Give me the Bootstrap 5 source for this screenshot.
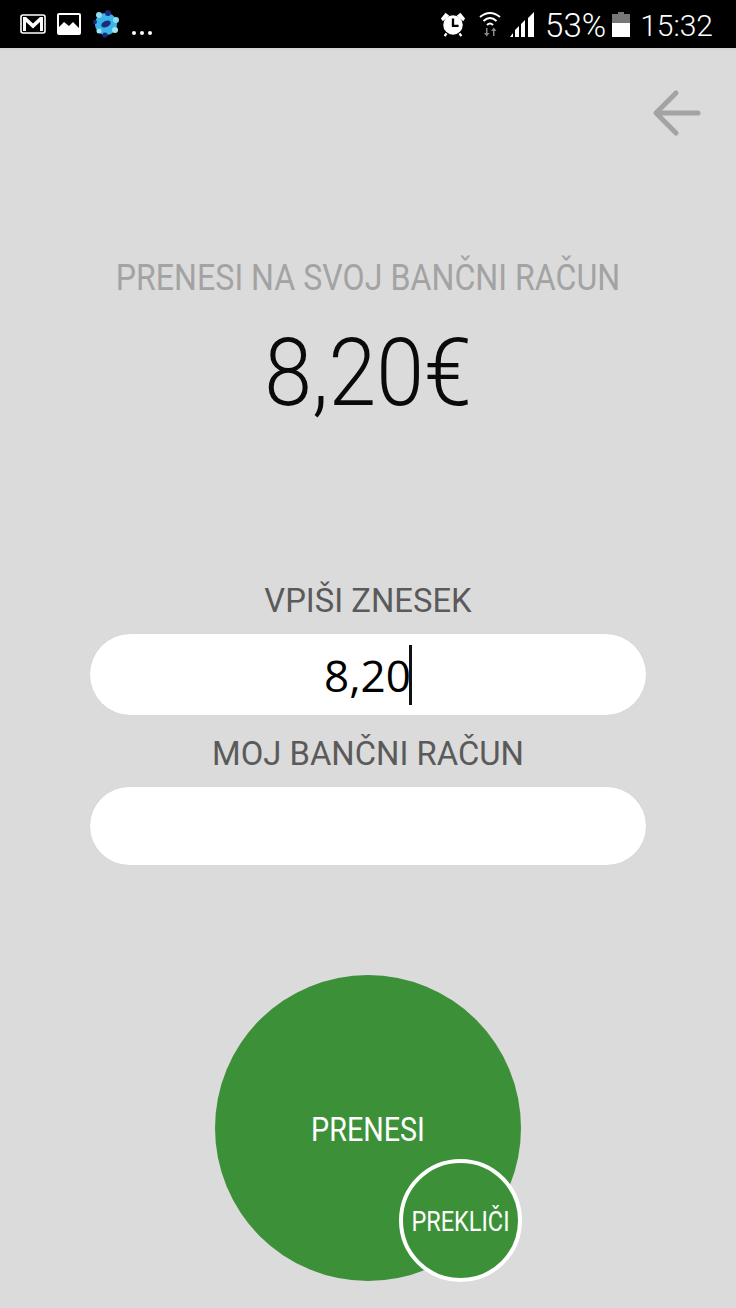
<!DOCTYPE html>
<html lang="sl">
<head>
<meta charset="utf-8">
<title>Prenesi</title>
<link href="https://cdn.jsdelivr.net/npm/bootstrap@5.3.0/dist/css/bootstrap.min.css" rel="stylesheet">
<style>
html,body{height:100%}
body{background:#dbdbdb;font-family:Roboto,"Liberation Sans",sans-serif;overflow:hidden}
.status-strip{height:50px;background:#000;color:#fff;border-bottom:2px solid #d4d4d4;padding:0 23px 0 20px}
.status-left{gap:11px}
.status-text{font-family:Roboto,sans-serif;font-size:33px;line-height:48px;font-weight:300;padding-top:3px}
.time-text{font-size:30px}
.dots-icon{margin-top:18px}
.alarm-gap{margin-right:13px}
.wifi-gap{margin-right:9px}
.signal-gap{margin-right:10px}
.batt-gap{margin:0 10px 0 6px}
.back-row{height:127px;padding:39px 34px 0 0}
.cond{display:block;transform-origin:center;white-space:nowrap}
.heading-text{font-size:36px;line-height:40px;color:#a3a3a3;margin-top:81px;transform:scaleX(.893)}
.amount-text{font-size:94px;line-height:100px;color:#0a0a0a;font-weight:300;margin-top:25px;transform:scaleX(.915)}
.form-area{margin-top:159px;padding:0 90px}
.field-label{font-size:32.800px;line-height:38px;color:#5a5a5a;text-align:center}
.pill-field{height:81px;border-radius:41px;background:#fff;box-shadow:0 0 1px #c9c9c9;font-family:"Open Sans",sans-serif;font-size:44px;color:#000;margin-top:14px}
.pill-second{height:78px;margin-top:14px}
.label-second{margin-top:20px}
.caret-bar{display:inline-block;width:3px;height:60px;background:#111;margin-left:-2px}
.action-wrap{margin-top:110px;width:306px;height:306px}
.circle-main{width:306px;height:306px;border-radius:50%;background:#3c9138;color:#fff;border:0;font-size:33px;padding:4px 0 0}
.circle-main span{display:block;transform:scaleX(.87)}
.circle-small{position:absolute;left:184px;top:184px;width:123px;height:123px;border-radius:50%;background:#3c9138;border:4px solid #fff;color:#fff;font-size:27px;padding:4px 0 0}
.circle-small span{display:block;transform:scaleX(.87)}
</style>
</head>
<body>
<div class="status-strip d-flex justify-content-between align-items-center">
  <div class="status-left d-flex align-items-center">
    <svg width="26" height="20" viewBox="0 0 26 20"><rect x="1" y="1" width="24" height="18" rx="2" fill="#000" stroke="#fff" stroke-width="1.6"/><path d="M3 3h3l7 6.500L20 3h3v14h-3V8l-7 6.500L6 8v9H3z" fill="#fff"/></svg>
    <svg width="24" height="22" viewBox="0 0 24 22"><rect width="24" height="22" rx="2" fill="#fff"/><rect x="2" y="2" width="20" height="13" fill="#000"/><path d="M2 14l5-5 5 4 4-4 6 6v5H2z" fill="#fff"/></svg>
    <svg width="28" height="28" viewBox="0 0 28 28"><circle cx="14" cy="14" r="11" fill="#3bb4e8"/><circle cx="16" cy="3" r="3" fill="#1b2a7a"/><circle cx="7" cy="5" r="3" fill="#8fdcf2"/><circle cx="24" cy="10" r="3" fill="#8fdcf2"/><circle cx="3" cy="12" r="2" fill="#1b2a7a"/><circle cx="23" cy="20" r="3" fill="#a4e3f3"/><circle cx="13" cy="25" r="2.600" fill="#1b2a7a"/><circle cx="7" cy="21" r="2.500" fill="#a4e3f3"/><ellipse cx="14" cy="14" rx="5" ry="3" fill="#1b2a7a" transform="rotate(-25 14 14)"/></svg>
    <svg class="dots-icon" width="22" height="6" viewBox="0 0 22 6"><circle cx="3" cy="3" r="2" fill="#fff"/><circle cx="11" cy="3" r="2" fill="#fff"/><circle cx="19" cy="3" r="2" fill="#fff"/></svg>
  </div>
  <div class="d-flex align-items-center">
    <svg class="alarm-gap" width="26" height="26" viewBox="0 0 28 28"><circle cx="14" cy="15" r="10.500" fill="#fff"/><path d="M14 8v8h6" fill="none" stroke="#000" stroke-width="2.500"/><path d="M1 8l5-6 4 3-7 6zM27 8l-5-6-4 3 7 6z" fill="#fff"/><path d="M7 24l-2 3M21 24l2 3" stroke="#fff" stroke-width="2.500"/></svg>
    <svg class="wifi-gap" width="22" height="26" viewBox="0 0 22 26"><g fill="none" stroke="#fff" stroke-width="2"><path d="M1 6q10-8 20 0"/><path d="M4.500 10q6.500-6 13 0"/><path d="M8 14q3-3 6 0"/></g><path d="M7 17v5H5l2.800 3.500L10.500 22h-2v-5zM14 25v-5h-2l2.800-3.500 2.700 3.500h-2v5z" fill="#888"/></svg>
    <svg class="signal-gap" width="25" height="26" viewBox="0 0 25 26"><path d="M0 26l3-4v4zM5 26v-7l4-4v11zM11 26V13l4-4v17zM18 26V7l6-6v25z" fill="#fff"/></svg>
    <span class="status-text">53%</span>
    <svg class="batt-gap" width="18" height="25" viewBox="0 0 18 25"><path d="M6 0h6v2h6v23H0V2h6z" fill="#777"/><rect y="11" width="18" height="14" fill="#fff"/></svg>
    <span class="status-text time-text">15:32</span>
  </div>
</div>

<div class="back-row d-flex justify-content-end align-items-start">
  <svg width="50" height="48" viewBox="0 0 50 48"><path d="M46 24H5M24 4L4 24l20 20" fill="none" stroke="#a3a3a3" stroke-width="5" stroke-linecap="round" stroke-linejoin="round"/></svg>
</div>

<div class="text-center">
  <div class="cond heading-text">PRENESI NA SVOJ BANČNI RAČUN</div>
  <div class="cond amount-text">8,20€</div>
</div>

<div class="form-area">
  <div class="field-label">VPIŠI ZNESEK</div>
  <div class="pill-field d-flex justify-content-center align-items-center"><span>8,20</span><span class="caret-bar"></span></div>
  <div class="field-label label-second">MOJ BANČNI RAČUN</div>
  <div class="pill-field pill-second"></div>
</div>

<div class="action-wrap position-relative mx-auto">
  <button type="button" class="btn circle-main"><span>PRENESI</span></button>
  <button type="button" class="btn circle-small"><span>PREKLIČI</span></button>
</div>
<script src="https://cdn.jsdelivr.net/npm/bootstrap@5.3.0/dist/js/bootstrap.bundle.min.js"></script>
</body>
</html>
